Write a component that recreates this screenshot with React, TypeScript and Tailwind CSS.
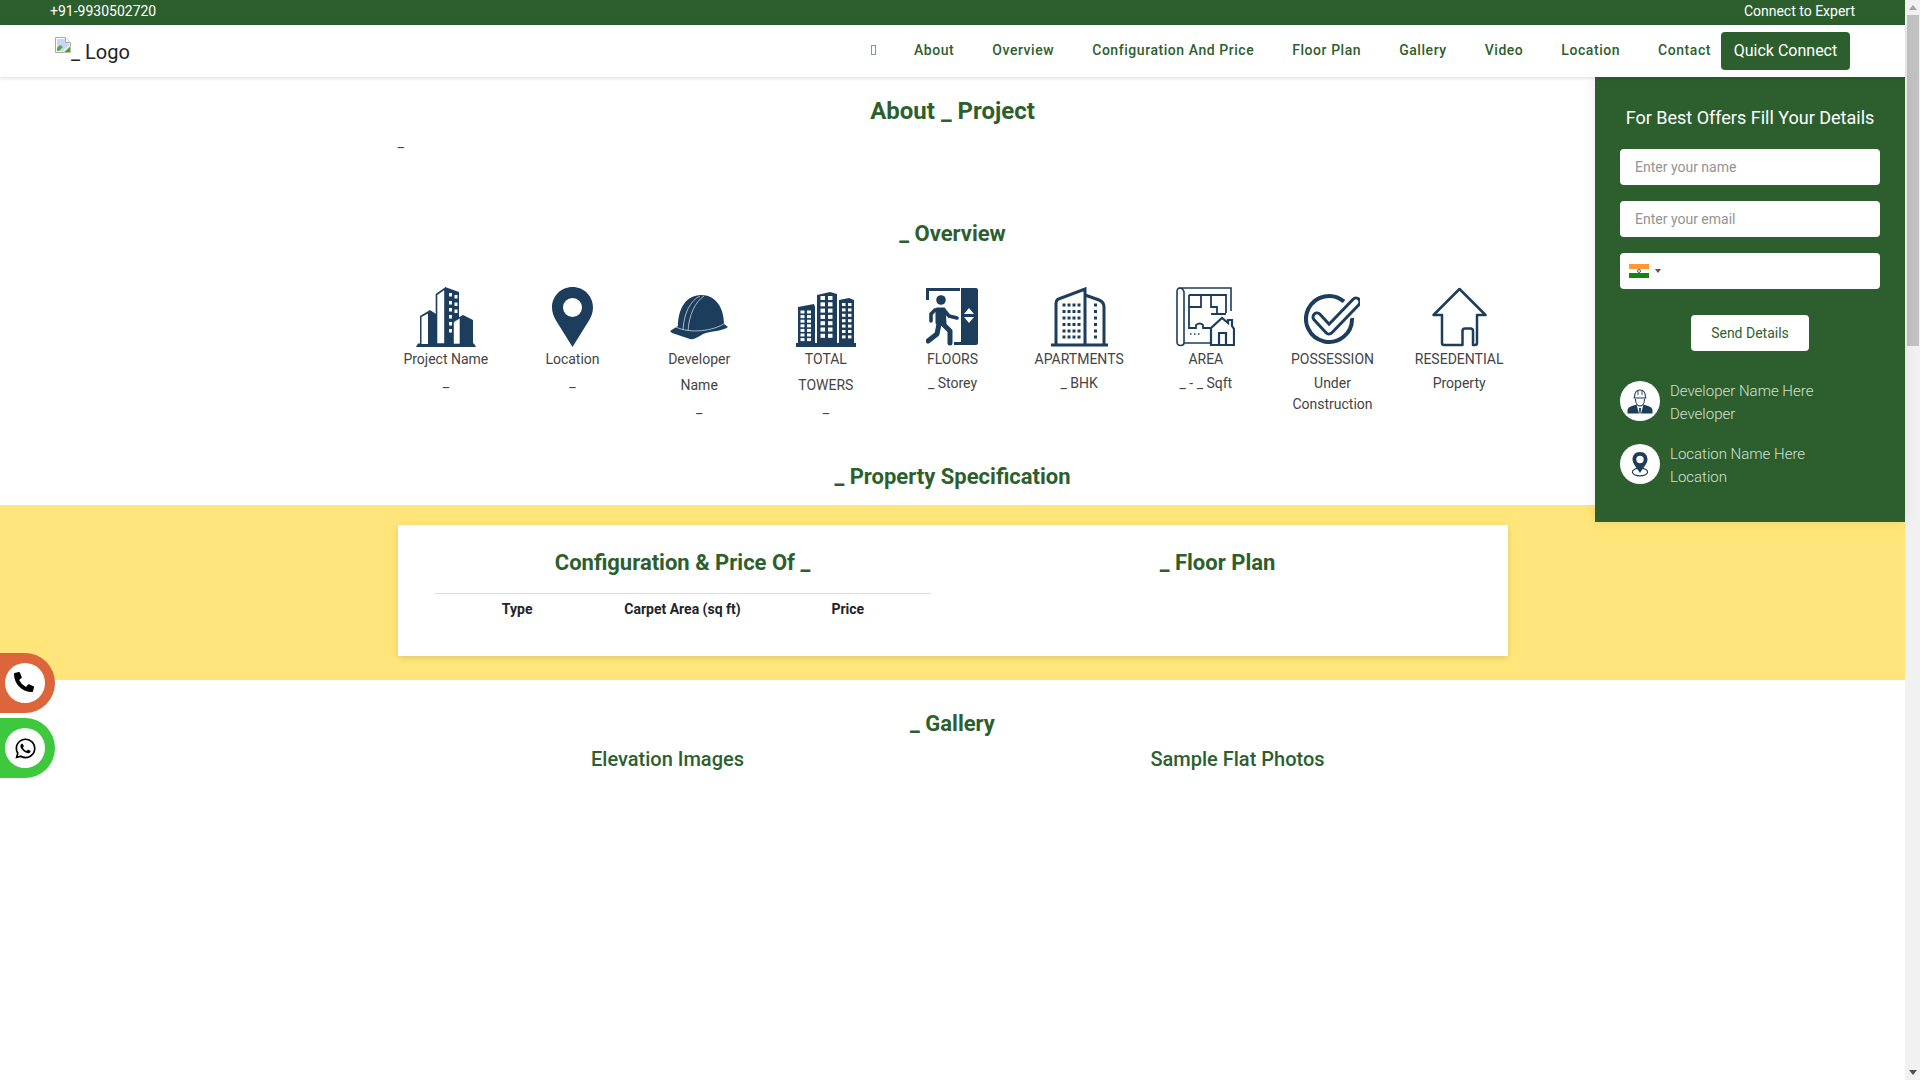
import React from "react";
import { FaPhoneAlt, FaWhatsapp } from "react-icons/fa";

const navy = "#1d3d5c";

const BuildingIcon = () => (
  <svg width="60" height="60" viewBox="0 0 60 60">
    <path d="M0 60 L2 56.5 H58 L60 60 Z" fill={navy} />
    <path d="M20.5 57 V7.5 L29 1.5 V57 Z" fill="#fff" stroke={navy} strokeWidth="1.6" />
    <path d="M29 0 L43 5 V57 H29 Z" fill={navy} />
    <g fill="#fff">
      <path d="M33 6 h3 v3.5 h-3z M38.5 8 h3 v3.5 h-3z M33 14 h3 v3.5 h-3z M38.5 15.5 h3 v3.5 h-3z M33 21 h3 v3.5 h-3z M38.5 22.5 h3 v3.5 h-3z M33 28 h3 v3.5 h-3z M33 35 h3 v3.5 h-3z M33 42 h3 v3.5 h-3z" />
    </g>
    <path d="M4 57 V29 L14 23 L20 27 V57 Z" fill={navy} />
    <path d="M5.5 57 V30 L12 26.5 V57 Z" fill="#fff" />
    <path d="M36 57 V34 L47 28 L57 33 V57 Z" fill={navy} />
    <path d="M37.5 57 V35 L44 31 V57 Z" fill="#fff" stroke={navy} strokeWidth="0.6" />
  </svg>
);

const PinIcon = () => (
  <svg width="41" height="60" viewBox="0 0 41 60">
    <path
      fillRule="evenodd"
      d="M20.5 0 C9 0 0 9 0 20.5 C0 26 2 30 4 33.5 L20.5 60 L37 33.5 C39 30 41 26 41 20.5 C41 9 32 0 20.5 0 Z M20.5 11 A9.5 9.5 0 1 1 20.5 30 A9.5 9.5 0 1 1 20.5 11 Z"
      fill={navy}
    />
  </svg>
);

const HelmetIcon = () => (
  <svg width="60" height="60" viewBox="0 0 60 60">
    <g transform="translate(1 8)">
      <path
        d="M8 31 C8 14 16 0 31 0 C46 0 54 13 54 29 L58 32 C54 36 40 36 33 39 C28 42 24 45 20 44 L2 38 L0 36 Z"
        fill={navy}
      />
      <path d="M6 32 C20 39 44 36 55 28" fill="none" stroke="#b9c6d2" strokeWidth="0.9" />
      <path d="M13 35 C14 18 20 6 30 1 M18 36 C19 20 25 7 34 1" fill="none" stroke="#b9c6d2" strokeWidth="0.9" />
    </g>
  </svg>
);

const windowRows = [0, 1, 2, 3, 4, 5, 6];

const TowersIcon = () => (
  <svg width="60" height="60" viewBox="0 0 60 60">
    <g transform="translate(0 5)">
      <path d="M0 55 V51 H60 V55 Z" fill={navy} />
      <path d="M2 51 V15 L18 12 L19 15 V51 Z" fill={navy} />
      <path d="M21 51 V3 L34 0 L41 2 V51 Z" fill={navy} />
      <path d="M43 51 V8 L53 6 L58 8 V51 Z" fill={navy} />
      <g fill="#fff">
        {windowRows.map((r) => (
          <React.Fragment key={r}>
            <rect x="4.5" y={18.5 + r * 4.6} width="4" height="3" />
            <rect x="11" y={18.5 + r * 4.6} width="4" height="3" />
            <rect x="24.5" y={4 + r * 6.3} width="4.5" height="4" />
            <rect x="32" y={4 + r * 6.3} width="4.5" height="4" />
            <rect x="46" y={11 + r * 5.4} width="3.5" height="3" />
            <rect x="52" y={11 + r * 5.4} width="3.5" height="3" />
          </React.Fragment>
        ))}
      </g>
    </g>
  </svg>
);

const ExitIcon = () => (
  <svg width="52" height="60" viewBox="0 0 52 60">
    <g transform="translate(0 1)">
      <path d="M1.5 12 V1.5 H34" fill="none" stroke={navy} strokeWidth="3" />
      <path d="M35 0 H50 Q52 0 52 2 V55 Q52 57 50 57 H28 V54 H35 Z" fill={navy} />
      <path d="M43 20 L48 26 H38 Z M38 29 H48 L43 35 Z" fill="#fff" />
      <circle cx="15" cy="12" r="4.8" fill={navy} />
      <path d="M11 21 L18 21 L19 35 L11 35 Z" fill={navy} stroke={navy} strokeWidth="3" strokeLinejoin="round" />
      <path d="M9 22 L5 26 L5 33 M18 22 L23 28 L31 30" fill="none" stroke={navy} strokeWidth="3.6" strokeLinecap="round" strokeLinejoin="round" />
      <path d="M13 36 L11 46 L2 53 M17 36 L24 43 V55" fill="none" stroke={navy} strokeWidth="5" strokeLinecap="round" strokeLinejoin="round" />
    </g>
  </svg>
);

const gridCols = [13, 18, 23, 28];
const gridRows = [18, 24.5, 31, 37.5, 44, 50];

const ApartmentIcon = () => (
  <svg width="57" height="60" viewBox="0 0 57 60">
    <path d="M0 58 H57" stroke={navy} strokeWidth="3" />
    <path d="M5 58 V17 Q5 12 9 11.5 L34 2 V58" fill="none" stroke={navy} strokeWidth="3" />
    <path d="M34 8 L48 13 Q53 15 53 20 V58" fill="none" stroke={navy} strokeWidth="3" />
    {gridRows.map((y) => (
      <React.Fragment key={y}>
        {gridCols.map((x) => (
          <rect key={x} x={x - 1.5} y={y - 1.5} width="3" height="3" fill={navy} />
        ))}
        <rect x="43" y={y - 1.5} width="3" height="3" fill={navy} />
      </React.Fragment>
    ))}
  </svg>
);

const PlanIcon = () => (
  <svg width="59" height="60" viewBox="0 0 59 60" fill="none" stroke={navy}>
    <path d="M35 56 H8 V5 Q7 1 3 1 H55 V24" strokeWidth="1.6" />
    <path d="M8 56 C8 59 1 60 1 55 V5 Q1 1 4 1" strokeWidth="1.6" />
    <path d="M13 8 H50 V26 M13 8 V41 H20 V38 Q24 35 27 38 V41 H34" strokeWidth="1.8" />
    <path d="M13 20 H25 V8 M35 8 V20 H41 V27 H35 M37 27 H50" strokeWidth="1.8" />
    <path d="M14 47 H15.5 M18 47 H19.5 M22 47 H23.5" strokeWidth="1.6" />
    <path d="M35 58 V41 L46 31 L52 36 V33 H56 V39 L58 42 V58 Z" fill="#fff" strokeWidth="2.2" />
    <path d="M43 58 V46 H50 V58" strokeWidth="2.2" />
  </svg>
);

const CheckIcon = () => (
  <svg width="56" height="60" viewBox="0 0 56 60">
    <g transform="translate(0 9)" fill="none" strokeLinecap="round" strokeLinejoin="round">
      <path d="M40 5.5 A23 23 0 1 0 48 22" stroke={navy} strokeWidth="4" strokeLinecap="butt" />
      <path d="M13 21 L25 34 L52 6" stroke="#fff" strokeWidth="15" />
      <path d="M13 21 L25 34 L52 6" stroke={navy} strokeWidth="11" />
      <path d="M13 21 L25 34 L52 6" stroke="#fff" strokeWidth="5" />
    </g>
  </svg>
);

const HouseIcon = () => (
  <svg width="55" height="60" viewBox="0 0 55 60">
    <path
      d="M10 28 H1.5 L27.5 2 L53.5 28 H45 V56 Q45 58 43 58 H41 V44 Q41 41.5 38.5 41.5 H33 Q30.5 41.5 30.5 44 V58 H12 Q10 58 10 56 Z"
      fill="none"
      stroke={navy}
      strokeWidth="2.5"
      strokeLinejoin="round"
    />
  </svg>
);

const BrokenImage = () => (
  <svg width="16" height="16" viewBox="0 0 16 16" className="shrink-0">
    <path d="M0.5 0.5 H10.5 L15.5 5.5 V9 L9 15.5 H0.5 Z" fill="#fff" stroke="#a9a9a9" />
    <path d="M2 2 H10 L14 6 V8.5 L8 14 H2 Z" fill="#c5d6f7" />
    <path d="M2 14 V11 L5 8 L8 10 L4 14 Z" fill="#5fa83f" />
    <path d="M10.5 0.5 V5.5 H15.5" fill="#fff" stroke="#a9a9a9" />
    <path d="M9 15.5 L15.5 9.5 V15.5 Z" fill="#4f9a35" />
  </svg>
);

const EngineerIcon = () => (
  <svg width="26" height="25" viewBox="0 0 26 25">
    <path d="M0.5 24.5 V21 Q1 18 5 17 L9.5 15.5 L12 24.5 Z M25.5 24.5 V21 Q25 18 21 17 L16.5 15.5 L14 24.5 Z" fill={navy} />
    <path d="M12 19 H14 L13.6 24.5 H12.4 Z" fill={navy} />
    <path d="M7.5 9 C7 3 10 1 13 1 C16 1 19 3 18.5 9" fill="none" stroke={navy} strokeWidth="1.1" />
    <path d="M6.5 9 H19.5 M8.5 10 C8.5 15 11 17 13 17 C15 17 17.5 15 17.5 10" fill="none" stroke={navy} strokeWidth="1.1" />
    <path d="M11 1.5 V6 M15 1.5 V6" stroke={navy} strokeWidth="0.9" />
  </svg>
);

const MapPinIcon = () => (
  <svg width="18" height="25" viewBox="0 0 18 25">
    <ellipse cx="9" cy="20" rx="7.6" ry="3.8" fill="none" stroke={navy} strokeWidth="1.2" />
    <path
      fillRule="evenodd"
      d="M9 0 C4 0 1.5 3.5 1.5 7.5 C1.5 11 5 15 9 21 C13 15 16.5 11 16.5 7.5 C16.5 3.5 14 0 9 0 Z M9 3.8 A3.7 3.7 0 1 1 9 11.2 A3.7 3.7 0 1 1 9 3.8 Z"
      fill={navy}
    />
  </svg>
);

const overview = [
  { icon: <BuildingIcon />, label: "Project Name", value: "_" },
  { icon: <PinIcon />, label: "Location", value: "_" },
  { icon: <HelmetIcon />, label: "Developer Name", value: "_" },
  { icon: <TowersIcon />, label: "TOTAL TOWERS", value: "_" },
  { icon: <ExitIcon />, label: "FLOORS", value: "_ Storey" },
  { icon: <ApartmentIcon />, label: "APARTMENTS", value: "_ BHK" },
  { icon: <PlanIcon />, label: "AREA", value: "_ - _ Sqft" },
  { icon: <CheckIcon />, label: "POSSESSION", value: "Under Construction" },
  { icon: <HouseIcon />, label: "RESEDENTIAL", value: "Property" },
];

const navLinks = ["About", "Overview", "Configuration And Price", "Floor Plan", "Gallery", "Video", "Location", "Contact"];

const SectionTitle = ({ children, className = "" }: { children: React.ReactNode; className?: string }) => (
  <h2 className={`text-center text-[22px] leading-[29px] font-bold text-[#2d5f2e] ${className}`}>{children}</h2>
);

const App: React.FC = () => {
  return (
    <div className="flex h-screen w-full overflow-hidden bg-white font-['Roboto',sans-serif] text-[14px] leading-[21px] text-[#444]">
      <div className="relative min-w-0 flex-1">
        {/* Top bar */}
        <div className="flex h-[25px] items-center justify-between bg-[#2d5f2e] px-[50px] pb-[3px] text-[14px] text-white">
          <span>+91-9930502720</span>
          <span>Connect to Expert</span>
        </div>

        {/* Navbar */}
        <div className="relative z-30 flex h-[52px] items-center justify-between bg-white px-[55px] shadow-[0_1px_4px_rgba(0,0,0,0.15)]">
          <div className="flex items-start pb-[2px] text-[20px] leading-[24px] text-[#222]">
            <BrokenImage />
            <span className="mt-[3px]">_ Logo</span>
          </div>
          <div className="flex items-center">
            <span className="mr-[38px] mb-[2px] h-[10px] w-[5px] border border-[#2d5f2e] opacity-60" />
            <div className="flex items-center gap-[38px] pb-[2px] text-[14px] font-medium tracking-[0.55px] text-[#2d5f2e]">
              {navLinks.map((l) => (
                <span key={l}>{l}</span>
              ))}
            </div>
            <button className="ml-[10px] flex h-[38px] w-[129px] items-center justify-center rounded-[4px] bg-[#2d5f2e] pb-[2px] text-[16px] text-white">
              Quick Connect
            </button>
          </div>
        </div>

        {/* About */}
        <div className="pt-[20px]">
          <h1 className="text-center text-[24px] leading-[29px] font-bold text-[#2d5f2e]">About _ Project</h1>
          <p className="mx-auto mt-[6px] w-[1110px]">_</p>
        </div>

        {/* Overview */}
        <SectionTitle className="mt-[66px]">_ Overview</SectionTitle>
        <div className="mx-auto mt-[39px] grid h-[132px] w-[1140px] grid-cols-9">
          {overview.map((o) => (
            <div key={o.label} className="flex flex-col items-center px-[15px] text-center">
              <div className="flex h-[60px] items-end justify-center">{o.icon}</div>
              <div className="-mt-px leading-[26px]">{o.label}</div>
              <div className={o.value === "_" ? "leading-[21px]" : "mt-px leading-[21px]"}>{o.value}</div>
            </div>
          ))}
        </div>

        {/* Property Specification */}
        <SectionTitle className="mt-[43px]">_ Property Specification</SectionTitle>
        <div className="mt-[14px] h-[175px] bg-[#ffe57a] pt-[20px]">
          <div className="mx-auto grid h-[131px] w-[1110px] grid-cols-[496px_506px] gap-[34px] bg-white px-[37px] shadow-[0_2px_6px_rgba(0,0,0,0.12)]">
            <div>
              <h3 className="mt-[24px] text-center text-[22px] leading-[27px] font-bold text-[#2d5f2e]">
                Configuration &amp; Price Of _
              </h3>
              <div className="mt-[17px] grid grid-cols-3 border-t border-[#dedede] pt-[5px] text-center font-bold text-[#212529]">
                <span>Type</span>
                <span>Carpet Area (sq ft)</span>
                <span>Price</span>
              </div>
            </div>
            <h3 className="mt-[24px] text-center text-[22px] leading-[27px] font-bold text-[#2d5f2e]">_ Floor Plan</h3>
          </div>
        </div>

        {/* Gallery */}
        <SectionTitle className="mt-[29px]">_ Gallery</SectionTitle>
        <div className="mx-auto mt-[9px] grid w-[1140px] grid-cols-2 text-center text-[20px] leading-[24px] font-medium text-[#2d5f2e]">
          <h4>Elevation Images</h4>
          <h4>Sample Flat Photos</h4>
        </div>

        {/* Enquiry panel */}
        <aside className="absolute top-[77px] right-0 z-20 h-[445px] w-[310px] bg-[#2d5f2e] px-[25px] shadow-[0_0_12px_rgba(0,0,0,0.08)]">
          <h3 className="mt-[30px] text-center text-[18px] leading-[22px] text-white">For Best Offers Fill Your Details</h3>
          <div className="mt-[20px] flex flex-col gap-[16px]">
            <input
              placeholder="Enter your name"
              className="h-[36px] w-full rounded-[4px] bg-white px-[15px] text-[14px] outline-none placeholder:text-[#939393]"
            />
            <input
              placeholder="Enter your email"
              className="h-[36px] w-full rounded-[4px] bg-white px-[15px] text-[14px] outline-none placeholder:text-[#939393]"
            />
            <div className="flex h-[36px] items-center rounded-[4px] bg-white pl-[9px]">
              <div className="flex h-[14px] w-[20px] flex-col">
                <span className="flex-1 bg-[#ff9933]" />
                <span className="flex flex-1 items-center justify-center bg-white">
                  <span className="h-[4px] w-[4px] rounded-full border border-[#4a5d9a]" />
                </span>
                <span className="flex-1 bg-[#138808]" />
              </div>
              <span className="ml-[6px] h-0 w-0 border-x-[3px] border-t-[4px] border-x-transparent border-t-[#555]" />
            </div>
          </div>
          <button className="mx-auto mt-[26px] block h-[36px] w-[118px] rounded-[4px] bg-white text-[14px] text-[#2d5f2e]">
            Send Details
          </button>
          <div className="mt-[30px] flex flex-col gap-[18px] text-[15px] leading-[23px] font-light text-[#d5e0d5]">
            <div className="flex items-start gap-[10px]">
              <div className="flex h-[40px] w-[40px] items-center justify-center rounded-full bg-white">
                <EngineerIcon />
              </div>
              <div className="-mt-[1px]">
                <div>Developer Name Here</div>
                <div>Developer</div>
              </div>
            </div>
            <div className="flex items-start gap-[10px]">
              <div className="flex h-[40px] w-[40px] items-center justify-center rounded-full bg-white">
                <MapPinIcon />
              </div>
              <div className="-mt-[1px]">
                <div>Location Name Here</div>
                <div>Location</div>
              </div>
            </div>
          </div>
        </aside>

        {/* Floating buttons */}
        <div className="absolute top-[653px] left-0 z-20 flex flex-col gap-[5px]">
          <a className="flex h-[60px] w-[55px] items-center rounded-r-[30px] bg-[#dd653b] pl-[5px]">
            <span className="flex h-[40px] w-[40px] items-center justify-center rounded-full bg-white pr-[2px] pb-[2px] text-black">
              <FaPhoneAlt size={20} />
            </span>
          </a>
          <a className="flex h-[60px] w-[55px] items-center rounded-r-[30px] bg-[#3ec83e] pl-[5px]">
            <span className="flex h-[40px] w-[40px] items-center justify-center rounded-full bg-white text-black">
              <FaWhatsapp size={23} />
            </span>
          </a>
        </div>
      </div>

      {/* Page scrollbar */}
      <div className="flex h-full w-[15px] shrink-0 flex-col items-center justify-between bg-[#f1f1f1]">
        <div className="flex w-full flex-col items-center">
          <div className="flex h-[15px] items-center justify-center">
            <span className="h-0 w-0 border-x-[4px] border-b-[5px] border-x-transparent border-b-[#a3a3a3]" />
          </div>
          <div className="h-[331px] w-[12px] bg-[#c1c1c1]" />
        </div>
        <div className="flex h-[15px] items-center justify-center">
          <span className="h-0 w-0 border-x-[4px] border-t-[5px] border-x-transparent border-t-[#505050]" />
        </div>
      </div>
    </div>
  );
};

export default App;
